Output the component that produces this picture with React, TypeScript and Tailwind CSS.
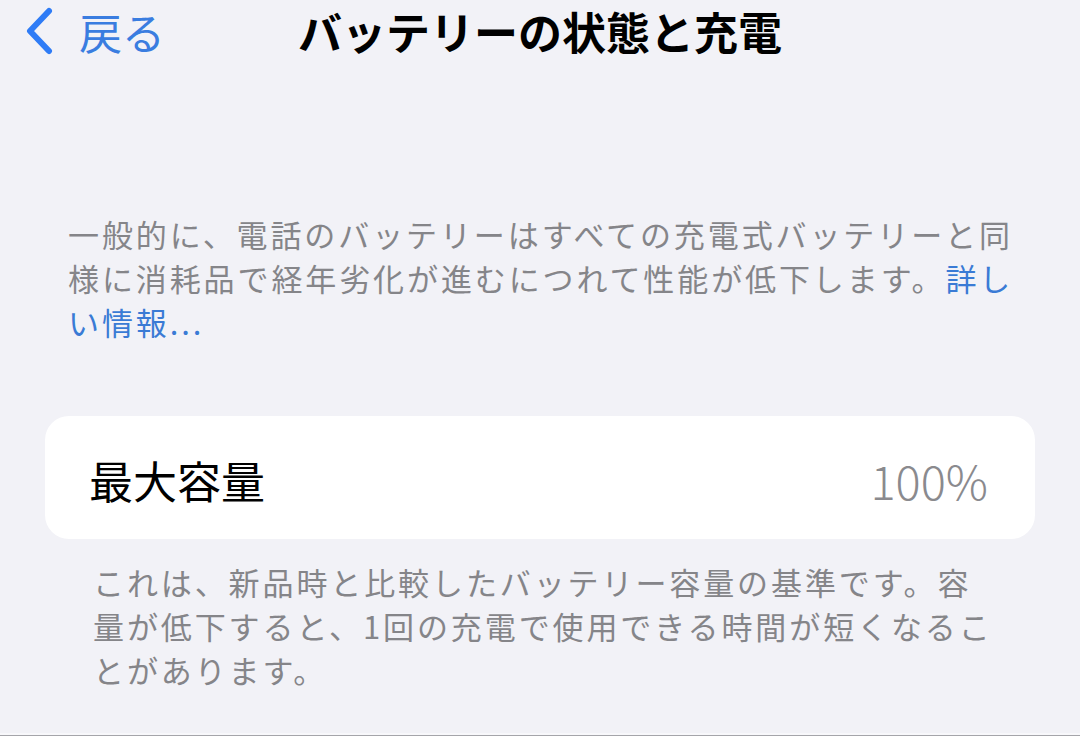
import React from 'react';

const BatteryHealth: React.FC = () => {
  return (
    <div className="min-h-screen bg-[#f2f2f7] flex flex-col font-['Noto_Sans_CJK_JP','Noto_Sans',sans-serif]">
      {/* Navigation bar */}
      <header className="grid grid-cols-[1fr_auto_1fr] items-center h-[62px]">
        <button className="flex items-center pl-[25px] text-[#2f7cf6]">
          <svg viewBox="0 0 30 48" className="w-[30px] h-[48px]" fill="none">
            <path d="M24 4 L5 24 L24 44" stroke="currentColor" strokeWidth="6" strokeLinecap="round" strokeLinejoin="round" />
          </svg>
          <span className="ml-[24px] text-[43px] leading-none text-[#3a7de0]">戻る</span>
        </button>
        <h1 className="text-[44px] font-bold leading-none text-black">バッテリーの状態と充電</h1>
        <div />
      </header>

      {/* Intro text */}
      <p className="mt-[150px] px-[68px] whitespace-nowrap text-[31px] leading-[44px] tracking-[2.9px] text-[#858589]">
        一般的に、電話のバッテリーはすべての充電式バッテリーと同
        <br />
        様に消耗品で経年劣化が進むにつれて性能が低下します。<span className="text-[#3a7bd5]">詳し</span>
        <br />
        <span className="text-[#3a7bd5]">い情報...</span>
      </p>

      {/* Maximum capacity card */}
      <div className="mt-[72px] mx-[45px] h-[123px] rounded-[24px] bg-white flex items-center justify-between pl-[44px] pr-[47px] pt-[4px]">
        <span className="text-[44px] leading-none text-black">最大容量</span>
        <span className="text-[47px] leading-none font-light text-[#8a8a8e]">100%</span>
      </div>

      <p className="mt-[21px] px-[93px] whitespace-nowrap text-[31px] leading-[44px] tracking-[2.9px] text-[#858589]">
        これは、新品時と比較したバッテリー容量の基準です。容
        <br />
        量が低下すると、1回の充電で使用できる時間が短くなるこ
        <br />
        とがあります。
      </p>

      <div className="mt-auto h-[3px] bg-[#f8f8fb] border-b border-[#a5a5aa]" />
    </div>
  );
};

export default BatteryHealth;
